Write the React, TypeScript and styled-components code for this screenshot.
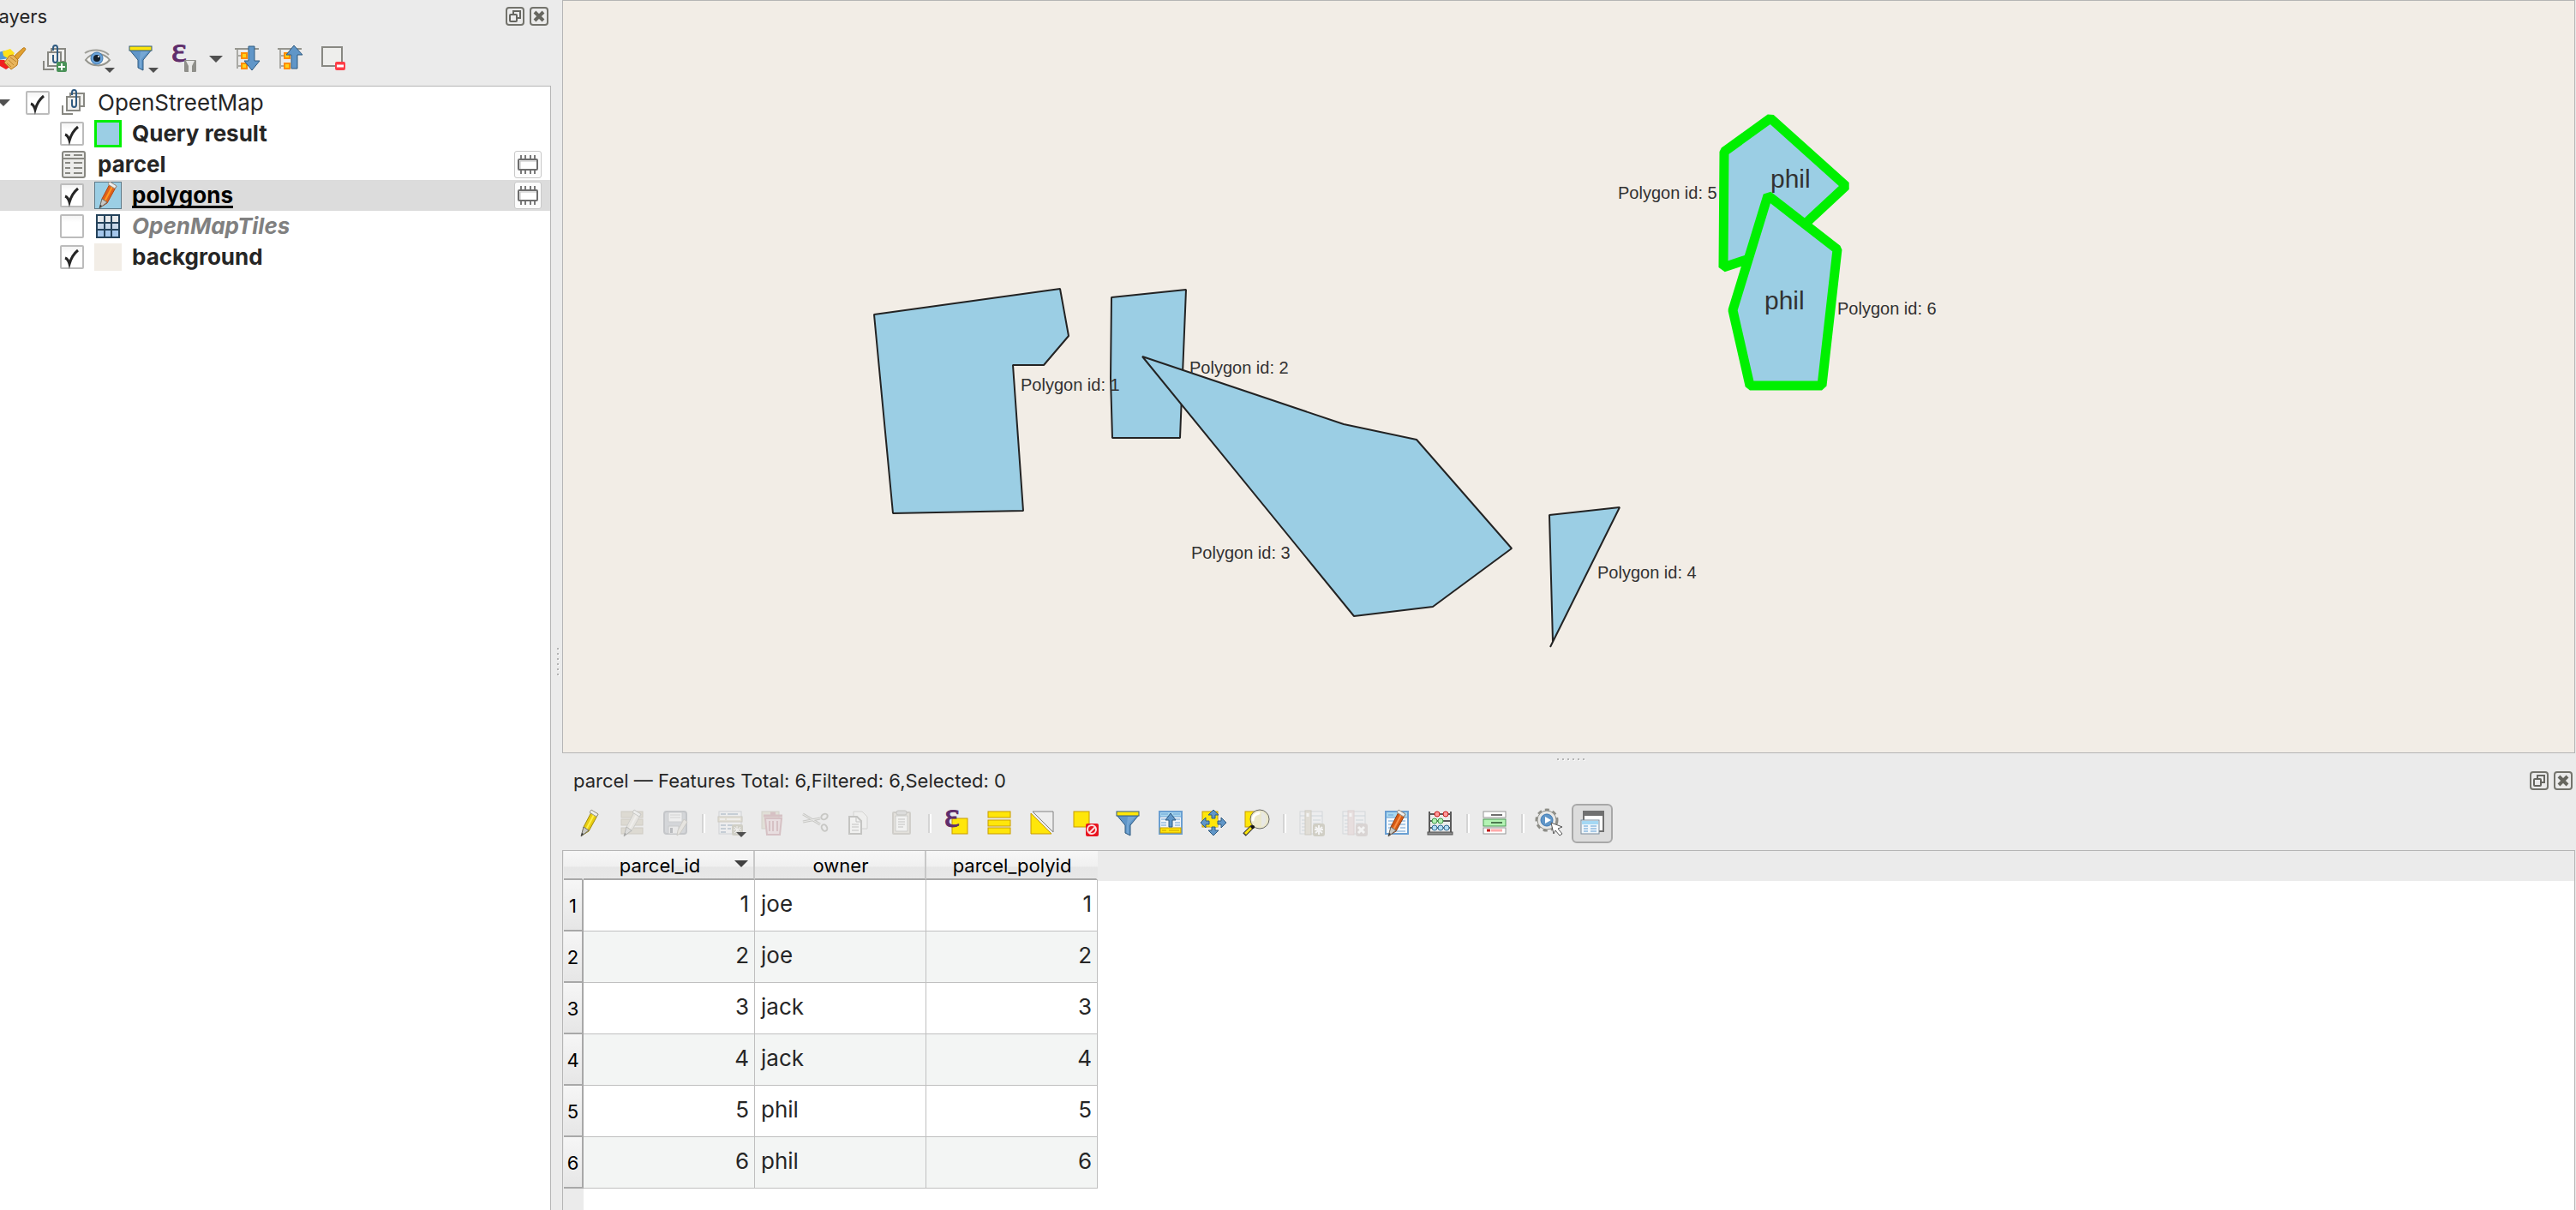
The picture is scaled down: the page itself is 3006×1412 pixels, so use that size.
import React from "react";
import styled, { createGlobalStyle, css } from "styled-components";

const color = {
  chrome: "#ebebeb",
  line: "#b5b5b5",
  grid: "#c0c0c0",
  text: "#262626",
  map: "#f2ede6",
  water: "#9bcee4",
  green: "#00f000",
  yellow: "#ffe60a",
  gold: "#c89b00",
  blue: "#6096c8",
  navy: "#2f5a80",
  grey: "#888882",
  purple: "#5f2d6b",
};

const GlobalStyle = createGlobalStyle`
  *, *::before, *::after { box-sizing: border-box; }
  body {
    margin: 0;
    overflow: hidden;
    background: ${color.chrome};
    color: ${color.text};
    font-family: Inter, "Liberation Sans", sans-serif;
    font-size: 26px;
  }
  button { font: inherit; color: inherit; }
`;

/* ---------- layout ---------- */

const Window = styled.div`
  display: flex;
  height: 100vh;
  overflow: hidden;
`;

const LayersPanel = styled.aside`
  display: flex;
  flex-direction: column;
  flex: none;
  width: 643px;
`;

const Main = styled.main`
  display: flex;
  flex-direction: column;
  flex: 1;
  min-width: 0;
`;

const Splitter = styled.div<{ $vertical?: boolean }>`
  display: flex;
  flex: none;
  gap: 4px;
  align-items: center;
  justify-content: center;
  ${(p) =>
    p.$vertical
      ? css`
          flex-direction: column;
          width: 13px;
          padding-left: 2px;
          padding-top: 132px;
        `
      : css`
          height: 13px;
          padding-left: 4px;
        `}
`;

const Dot = styled.i`
  width: 2px;
  height: 2px;
  background: #b4b4b4;
  box-shadow: 1px 1px 0 #f8f8f8;
`;

const PanelHeader = styled.header<{ $clipped?: boolean }>`
  display: flex;
  align-items: center;
  gap: 6px;
  flex: none;
  height: 38px;
  padding: 0 ${(p) => (p.$clipped ? "3px 0 0" : "4px 0 13px")};
`;

const PanelTitle = styled.h2<{ $clipped?: boolean }>`
  flex: 1;
  margin: 0 0 0 ${(p) => (p.$clipped ? "-14px" : "0")};
  font-size: 22px;
  line-height: 28px;
  font-weight: 400;
  white-space: pre;
`;

const HeaderButton = styled.button`
  display: block;
  width: 22px;
  height: 22px;
  padding: 0;
  border: 0;
  background: none;
  svg { display: block; }
`;

const Toolbar = styled.div<{ $inset?: boolean }>`
  display: flex;
  align-items: center;
  flex: none;
  height: ${(p) => (p.$inset ? "62px" : "60px")};
  margin-bottom: ${(p) => (p.$inset ? "0" : "2px")};
  margin-left: ${(p) => (p.$inset ? "7px" : "-11px")};
`;

const ToolButton = styled.button<{ $pressed?: boolean; $faded?: boolean; $narrow?: boolean }>`
  display: grid;
  place-items: center;
  width: ${(p) => (p.$narrow ? "25px" : p.$pressed ? "48px" : "50px")};
  height: 46px;
  margin: ${(p) => (p.$pressed ? "0 1px" : "0")};
  padding: 0;
  border: 2px solid transparent;
  border-radius: 6px;
  background: none;
  svg { display: block; overflow: visible; }
  ${(p) => p.$pressed && "border-color: #a8a8a8; background: #dcdcdc;"}
  ${(p) => p.$faded && "svg > g { opacity: 0.4; }"}
`;

const Separator = styled.span`
  width: 4px;
  height: 22px;
  margin: 0 4px 0 6px;
  border-left: 2px solid #d4d4d4;
  border-right: 2px solid #fff;
`;

/* ---------- layer tree ---------- */

const Tree = styled.ul`
  flex: 1;
  margin: 0;
  padding: 1px 0 0;
  list-style: none;
  background: #fff;
  border-top: 1px solid ${color.line};
  border-right: 1px solid ${color.line};
`;

const TreeRow = styled.li<{ $level: number; $selected?: boolean }>`
  display: flex;
  align-items: center;
  height: 36px;
  padding-left: ${(p) => p.$level * 70}px;
  padding-right: 10px;
  ${(p) => p.$selected && "background: #dcdcdc;"}
`;

const Expander = styled.button`
  width: 30px;
  height: 36px;
  padding: 0;
  border: 0;
  background: none;
  svg { display: block; }
`;

const CheckWrap = styled.span`
  display: grid;
  margin-right: 12px;
  > * { grid-area: 1 / 1; }
  svg { pointer-events: none; }
`;

const Check = styled.input`
  appearance: none;
  width: 28px;
  height: 28px;
  margin: 0;
  border: 2px solid #bcbcbc;
  border-radius: 2px;
  background: linear-gradient(#f4f4f4, #fff 30%);
`;

const LayerIcon = styled.span`
  display: block;
  width: 32px;
  height: 32px;
  margin-right: 12px;
  svg { display: block; }
`;

const Swatch = styled.span<{ $fill: string; $edge?: string }>`
  display: block;
  width: 32px;
  height: 32px;
  background: ${(p) => p.$fill};
  border: ${(p) => p.$edge || "0"};
`;

const LayerName = styled.label<{ $bold?: boolean; $muted?: boolean; $current?: boolean }>`
  flex: 1;
  font-size: 26px;
  line-height: 32px;
  font-weight: ${(p) => (p.$bold ? 700 : 400)};
  ${(p) => p.$muted && "font-style: italic; color: #808080;"}
  ${(p) =>
    p.$current &&
    `color: #000; text-decoration: underline; text-decoration-thickness: 3px;
     text-underline-offset: 3px; text-decoration-skip-ink: none;`}
`;

const ChipButton = styled.button`
  width: 32px;
  height: 32px;
  padding: 0;
  border: 1px solid #c8c8c8;
  border-radius: 3px;
  background: #fcfcfc;
  svg { display: block; }
`;

/* ---------- map ---------- */

const MapCanvas = styled.section`
  flex: 1;
  min-height: 0;
  margin-right: 1px;
  background: ${color.map};
  border: 1px solid ${color.line};
  svg {
    display: block;
    width: 100%;
    height: 100%;
  }
`;

const MapLabel = styled.text<{ $large?: boolean }>`
  font-family: "Liberation Sans", Arial, sans-serif;
  font-size: ${(p) => (p.$large ? 30 : 20)}px;
  fill: #323232;
`;

const Parcel = styled.polygon<{ $match?: boolean }>`
  fill: ${color.water};
  stroke: ${(p) => (p.$match ? color.green : "#232323")};
  stroke-width: ${(p) => (p.$match ? 11 : 2)};
  stroke-linejoin: bevel;
`;

/* ---------- attribute table ---------- */

const TableArea = styled.div`
  flex: none;
  margin-right: 1px;
  padding-left: 1px;
  padding-bottom: 25px;
  border: 1px solid ${color.line};
  border-bottom: 0;
  background: linear-gradient(${color.chrome} 35px, transparent 35px),
    linear-gradient(to right, ${color.chrome} 24px, #fff 24px);
`;

const Table = styled.table`
  border-collapse: separate;
  border-spacing: 0;
  table-layout: fixed;
  width: 623px;
`;

const Col = styled.col<{ $w: number }>`
  width: ${(p) => p.$w}px;
`;

const HeadCell = styled.th`
  height: 34px;
  padding: 2px 0 0 2px;
  font-size: 22px;
  line-height: 28px;
  font-weight: 400;
  color: #000;
  background: linear-gradient(#f7f7f7, #f0f0f0 55%, #e6e6e6 60%, #e8e8e8);
  border-bottom: 2px solid #a8a8a8;
  border-right: 2px solid #c8c8c8;
  &:first-child, &:last-child { border-right-color: transparent; }
`;

const SortHead = styled.span`
  display: grid;
  grid-template-columns: 1fr 22px;
  align-items: start;
  svg { display: block; margin-top: 8px; }
`;

const RowHead = styled.th`
  height: 60px;
  padding: 2px 0 0;
  font-size: 22px;
  line-height: 28px;
  font-weight: 400;
  color: #000;
  background: linear-gradient(#f6f6f6, #e6e6e6);
  border-right: 2px solid #a8a8a8;
  border-bottom: 2px solid #a8a8a8;
`;

const Cell = styled.td<{ $right?: boolean; $alt?: boolean }>`
  height: 60px;
  padding: 0 6px 3px 7px;
  font-size: 26px;
  line-height: 32px;
  text-align: ${(p) => (p.$right ? "right" : "left")};
  background: ${(p) => (p.$alt ? "#f3f5f4" : "#fff")};
  border-right: 1px solid ${color.grid};
  border-bottom: 1px solid ${color.grid};
`;

/* ---------- icons ---------- */

const Svg = ({ children, size = 32 }: { children: React.ReactNode; size?: number }) => (
  <svg width={size} height={size} viewBox={`0 0 ${size} ${size}`} fill="none" aria-hidden="true">
    <g>{children}</g>
  </svg>
);

const MenuMark = ({ x, y }: { x: number; y: number }) => (
  <path d={`M${x} ${y}h12l-6 6z`} fill="#505050" />
);

const EpsilonText = ({ x, y }: { x: number; y: number }) => (
  <text x={x} y={y} fontFamily='"Liberation Serif", serif' fontSize="42" fill={color.purple} stroke={color.purple} strokeWidth="1">ε</text>
);

const FloatIcon = () => (
  <Svg size={22}>
    <rect x="1" y="1" width="20" height="20" rx="3" stroke="#73736c" strokeWidth="2" />
    <rect x="5" y="9" width="8" height="8" rx="1" stroke="#666660" strokeWidth="2" />
    <path d="M9 8V5h8v8h-3" stroke="#666660" strokeWidth="2" />
  </Svg>
);

const CloseIcon = () => (
  <Svg size={22}>
    <rect x="1" y="1" width="20" height="20" rx="3" stroke="#73736c" strokeWidth="2" />
    <path d="M6 6l10 10M16 6L6 16" stroke="#66665f" strokeWidth="4" />
  </Svg>
);

const BrushIcon = () => (
  <Svg>
    <path d="M0 9l8-2 4 9-12 2z" fill="#4f97d8" />
    <path d="M5 8l9-3 5 5-5 8-8-5z" fill="#ffe21a" />
    <path d="M-2 18l9 0 8 7-6 4-9-5z" fill="#f02020" />
    <path d="M29 4c2-1 4 1 2 3L22 18l-4-4z" fill="#e0a030" stroke="#b97818" />
    <path d="M13 13l4-1 6 6-1 6-7 5-8-8z" fill="#e8b45c" stroke="#b97818" />
    <path d="M10 22l5 4M12 18l6 6M14 15l7 5" stroke="#c08428" strokeWidth="1" />
  </Svg>
);

const GroupShape = () => (
  <>
    <path d="M3 19v10h12" stroke={color.grey} strokeWidth="2" />
    <rect x="12" y="5" width="16" height="15" fill="#f0f0ee" stroke={color.grey} strokeWidth="2" />
    <rect x="8" y="9" width="15" height="16" fill="#f0f0ee" stroke={color.grey} strokeWidth="2" />
    <path d="M14 7V4c0-4 5-4 5 0v14c0 4-5 4-5 0v-6" stroke={color.navy} strokeWidth="2" />
  </>
);

const GroupIcon = () => <Svg><GroupShape /></Svg>;

const AddGroupIcon = () => (
  <Svg>
    <GroupShape />
    <rect x="18" y="20" width="12" height="12" rx="2" fill="#4a9258" />
    <path d="M24 22v8M20 26h8" stroke="#fff" strokeWidth="2" />
  </Svg>
);

const EyeIcon = () => (
  <Svg>
    <path d="M1 10C8 5 22 5 29 12" stroke="#a0a09a" strokeWidth="2" />
    <path d="M2 18C8 9 22 8 30 18C22 27 9 26 2 18z" fill="#f6f6f4" stroke="#96968f" strokeWidth="2" />
    <circle cx="15" cy="16" r="7" fill="#6aa2d8" stroke="#3f78ae" strokeWidth="1" />
    <circle cx="15" cy="16" r="4" fill="#14202c" />
    <circle cx="17" cy="14" r="1" fill="#fff" />
    <MenuMark x={24} y={27} />
  </Svg>
);

const Funnel = () => (
  <>
    <path d="M3 6h26L19 18v12l-6-3v-9z" fill={color.blue} stroke={color.navy} strokeWidth="1" />
    <path d="M16 8l9 0-8 9v11l-2-1V16z" fill="#8ab8e0" opacity="0.5" />
    <rect x="3" y="2" width="26" height="5" fill={color.yellow} stroke={color.navy} strokeWidth="1" />
  </>
);

const FilterMenuIcon = () => <Svg><Funnel /><MenuMark x={25} y={27} /></Svg>;
const FilterIcon = () => <Svg><Funnel /></Svg>;

const ExpressionFilterIcon = () => (
  <Svg>
    <EpsilonText x={2} y={20} />
    <rect x="17" y="18" width="14" height="14" rx="1" fill="#8f8f8a" />
    <path d="M19 19h10l-3 6v7h-4v-7z" fill="#e8e8e6" />
  </Svg>
);

const DropIcon = () => (
  <Svg size={16}><path d="M0 5h16l-8 8z" fill="#505050" /></Svg>
);

const TreeBars = () => (
  <>
    <path d="M1 5h28" stroke="#96968f" strokeWidth="2" />
    <path d="M4 6v22M4 13h5M4 25h5" stroke="#aaaaa5" strokeWidth="2" />
    <rect x="9" y="10" width="6" height="6" fill="#ffd21a" stroke="#ff8c00" strokeWidth="2" />
    <rect x="9" y="22" width="6" height="6" fill="#ffd21a" stroke="#ff8c00" strokeWidth="2" />
  </>
);

const ExpandIcon = () => (
  <Svg>
    <TreeBars />
    <path d="M17 2h7v17h6l-9 11-9-11h5z" fill={color.blue} stroke={color.navy} strokeWidth="1" />
  </Svg>
);

const CollapseIcon = () => (
  <Svg>
    <TreeBars />
    <path d="M17 28h7V12h6L20 1l-9 11h6z" fill={color.blue} stroke={color.navy} strokeWidth="1" />
  </Svg>
);

const RemoveIcon = () => (
  <Svg>
    <rect x="3" y="3" width="23" height="22" fill="#eeeeec" stroke={color.grey} strokeWidth="2" />
    <rect x="18" y="20" width="12" height="10" rx="2" fill="#ff3c46" />
    <path d="M20 25h8" stroke="#fff" strokeWidth="3" />
  </Svg>
);

const Pencil = ({ body, shade, edge }: { body: string; shade: string; edge: string }) => (
  <>
    <path d="M19 1l7 4-11 20-8 5 2-10z" fill={body} stroke={edge} strokeWidth="1" />
    <path d="M22 4L12 23" stroke={shade} strokeWidth="2" />
    <path d="M18 0l8 5-2 3-8-5z" fill="#eeeeec" stroke="#96968f" strokeWidth="1" />
    <path d="M9 20l6 4-9 7z" fill="#c8c8c4" stroke="#6e6e68" strokeWidth="1" />
    <path d="M7 27l2 1-3 3z" fill="#333" />
  </>
);

const YellowPencilIcon = () => (
  <Svg><Pencil body="#e8cc10" shade="#fff04a" edge="#a08a10" /></Svg>
);

const SwatchPencilIcon = () => (
  <Svg>
    <rect x="0" y="0" width="32" height="32" fill={color.water} stroke="#5f7a88" strokeWidth="2" />
    <Pencil body="#e0601c" shade="#ff9a20" edge="#b04810" />
  </Svg>
);

const MultiEditIcon = () => (
  <Svg>
    {[2, 11, 21].map((y) => (
      <rect key={y} x="3" y={y} width="25" height="7" fill="#cac2ae" stroke="#a8a08c" strokeWidth="1" />
    ))}
    <Pencil body="#e0dcd0" shade="#f4f2ec" edge="#a0a098" />
  </Svg>
);

const SaveIcon = () => (
  <Svg>
    <rect x="3" y="2" width="26" height="26" rx="3" fill="#b4b8c0" stroke="#8c9098" strokeWidth="2" />
    <rect x="8" y="3" width="16" height="11" fill="#f4f4f4" stroke="#a0a4a8" />
    <path d="M10 6h12M10 9h12" stroke="#b0b0b0" strokeWidth="1" />
    <rect x="8" y="19" width="12" height="9" fill="#e6e6e6" stroke="#94989c" />
    <rect x="10" y="21" width="3" height="6" fill="#70747c" />
    <path d="M26 11l4 3-8 13-4 3 1-6z" fill="#e0dcd0" stroke="#a09c90" />
  </Svg>
);

const AddFeatureIcon = () => (
  <svg width="32" height="32" viewBox="0 0 32 32" fill="none" aria-hidden="true">
    <g>
      <rect x="3" y="2" width="26" height="26" fill="#f0f2f4" stroke="#a8b0b8" strokeWidth="1" />
      <path d="M5 5h6M13 5h12M5 18h6M5 22h6M5 26h6M13 18h6M13 22h4" stroke="#8ea2b6" strokeWidth="2" />
      <rect x="2" y="8" width="28" height="6" fill="#d6cfb8" stroke="#a09880" />
      <path d="M4 11h6M12 11h16" stroke="#f4f2ea" strokeWidth="2" />
      <rect x="18" y="17" width="13" height="13" rx="2" fill="#aaa690" />
      <path d="M24 19v9M20 23h9M21 20l7 7M28 20l-7 7" stroke="#fff" strokeWidth="1" />
    </g>
    <MenuMark x={23} y={26} />
  </svg>
);

const TrashIcon = () => (
  <Svg>
    <rect x="3" y="2" width="20" height="20" fill="#d4ceba" stroke="#b0aa98" />
    <path d="M5 7h22M13 4h6" stroke="#b8848c" strokeWidth="3" />
    <path d="M7 10h19l-2 19H9z" fill="#e6ccd0" stroke="#b8848c" strokeWidth="2" />
    <path d="M12 13v12M16 13v12M21 13v12" stroke="#b8848c" strokeWidth="2" />
  </Svg>
);

const CutIcon = () => (
  <Svg>
    <path d="M1 5l20 12M1 14l20-4" stroke="#96968f" strokeWidth="3" />
    <path d="M1 5l20 12M1 14l20-4" stroke="#e6e6e2" strokeWidth="1" />
    <ellipse cx="26" cy="8" rx="4" ry="3" transform="rotate(-35 26 8)" stroke="#96968f" strokeWidth="2" />
    <ellipse cx="26" cy="21" rx="3" ry="4" transform="rotate(-30 26 21)" stroke="#96968f" strokeWidth="2" />
  </Svg>
);

const CopyIcon = () => (
  <Svg>
    <path d="M10 2h10l6 6v14H10z" fill="#f4f4f2" stroke="#b0b0aa" />
    <path d="M5 8h9l5 5v15H5z" fill="#fafaf8" stroke="#8c8c86" strokeWidth="2" />
    <path d="M13 8v6h6M8 17h8M8 20h8M8 24h8" stroke="#8c8c86" strokeWidth="1" />
  </Svg>
);

const PasteIcon = () => (
  <Svg>
    <rect x="6" y="3" width="20" height="25" rx="1" fill="#d8d4c8" stroke="#a8a49a" strokeWidth="2" />
    <path d="M9 7h14v18H9z" fill="#fafaf8" stroke="#a0a09a" />
    <rect x="10" y="1" width="12" height="5" rx="2" fill="#c8c8c4" stroke="#8c8c86" />
    <path d="M12 11h8M12 14h8M12 17h8M12 20h6" stroke="#8c8c86" strokeWidth="1" />
  </Svg>
);

const YellowBox = ({ x, y, w, h }: { x: number; y: number; w: number; h: number }) => (
  <rect x={x} y={y} width={w} height={h} fill={color.yellow} stroke={color.gold} strokeWidth="1" />
);

const SelectExpressionIcon = () => (
  <Svg>
    <YellowBox x={11} y={10} w={18} h={18} />
    <EpsilonText x={2} y={20} />
  </Svg>
);

const SelectAllIcon = () => (
  <Svg>
    <YellowBox x={3} y={2} w={26} h={7} />
    <YellowBox x={3} y={12} w={26} h={7} />
    <YellowBox x={3} y={21} w={26} h={7} />
  </Svg>
);

const InvertIcon = () => (
  <Svg>
    <path d="M3 4v24h24z" fill={color.yellow} stroke={color.gold} strokeWidth="1" />
    <path d="M5 2h24v24z" fill="#eeeeee" stroke="#808080" strokeWidth="1" />
  </Svg>
);

const DeselectIcon = () => (
  <Svg>
    <YellowBox x={3} y={2} w={18} h={18} />
    <rect x="17" y="16" width="15" height="15" rx="2" fill="#e81420" />
    <circle cx="24" cy="23" r="5" stroke="#fbe0e0" strokeWidth="2" />
    <path d="M21 27l7-7" stroke="#fbe0e0" strokeWidth="2" />
  </Svg>
);

const MoveTopIcon = () => (
  <Svg>
    <rect x="3" y="2" width="26" height="26" fill="#f0f4f8" stroke="#6a9fd2" strokeWidth="2" />
    <rect x="4" y="3" width="24" height="5" fill="#a8d8f0" />
    <path d="M5 5h8M19 5h8M4 8h24M5 11h6M21 11h6M5 15h6M21 15h6M5 18h6M21 18h6" stroke="#6a9fd2" strokeWidth="1" />
    <YellowBox x={4} y={21} w={24} h={6} />
    <path d="M6 24h5M14 24h12" stroke={color.gold} strokeWidth="1" />
    <path d="M14 20v-8h-4l6-8 6 8h-4v8z" fill={color.blue} stroke={color.navy} strokeWidth="1" />
  </Svg>
);

const PanIcon = () => (
  <Svg>
    <YellowBox x={3} y={2} w={18} h={18} />
    <rect x="12" y="11" width="9" height="9" fill={color.yellow} />
    <g fill={color.blue} stroke={color.navy} strokeWidth="1">
      <path d="M16 0l6 6h-4v4h-4V6h-4z" />
      <path d="M16 30l6-6h-4v-4h-4v4h-4z" />
      <path d="M1 15l6-6v4h4v4H7v4z" />
      <path d="M31 15l-6-6v4h-4v4h4v4z" />
    </g>
  </Svg>
);

const ZoomIcon = () => (
  <Svg>
    <YellowBox x={3} y={2} w={18} h={18} />
    <path d="M12 19L2 29" stroke="#333" strokeWidth="5" />
    <path d="M10 21l-7 7" stroke={color.yellow} strokeWidth="3" />
    <circle cx="20" cy="11" r="11" fill="#ebe8cc" stroke="#6a6a66" strokeWidth="1" />
    <path d="M22 2a10 10 0 010 18z" fill="#e8e8e4" />
    <path d="M12 12c0-5 3-7 7-8" stroke="#fff" strokeWidth="3" strokeLinecap="round" />
    <circle cx="12" cy="20" r="2" fill="#111" />
  </Svg>
);

const FieldBase = ({ tint, edge }: { tint: string; edge: string }) => (
  <>
    <rect x="3" y="2" width="26" height="26" fill="#f0f2f4" stroke="#b4bcc4" />
    <path d="M3 7h26M5 12h4M18 12h9M5 16h4M18 16h9M5 20h4M5 24h4" stroke="#a4b4c4" strokeWidth="1" />
    <rect x="9" y="1" width="7" height="28" fill={tint} stroke={edge} />
    <path d="M12 4v4" stroke="#fff" strokeWidth="3" />
  </>
);

const NewFieldIcon = () => (
  <Svg>
    <FieldBase tint="#d0cab8" edge="#a49c88" />
    <rect x="18" y="16" width="14" height="15" rx="3" fill="#a8a48c" />
    <path d="M25 18v11M20 23h10M21 20l8 7M29 20l-8 7" stroke="#fff" strokeWidth="2" />
  </Svg>
);

const DeleteFieldIcon = () => (
  <Svg>
    <FieldBase tint="#e2cccc" edge="#c8acac" />
    <rect x="18" y="16" width="14" height="15" rx="3" fill="#c0b4b0" />
    <path d="M21 20l7 7M28 20l-7 7" stroke="#fff" strokeWidth="3" />
  </Svg>
);

const OrganizeIcon = () => (
  <Svg>
    <rect x="3" y="2" width="26" height="26" fill="#f4f8fb" stroke="#6a9fd2" strokeWidth="2" />
    <rect x="4" y="3" width="24" height="6" fill="#a8d8f0" />
    <path d="M6 6h6M4 9h24M6 13h6M15 13h11M6 17h6M6 21h3M20 21h6M15 25h11M15 17h11" stroke="#6a9fd2" strokeWidth="1" />
    <Pencil body="#d85a14" shade="#f89048" edge="#8c3c10" />
  </Svg>
);

const AbacusIcon = () => (
  <Svg>
    <path d="M4 2v24M29 2v24M4 5h25M4 13h25M4 21h25" stroke="#5a5a5a" strokeWidth="2" />
    <rect x="2" y="26" width="29" height="3" fill="#909090" stroke="#505050" />
    {[
      [13, 5, "#ff9c9c", "#c81414"], [23, 5, "#ff9c9c", "#c81414"],
      [10, 13, "#b4f0b4", "#3c9a46"], [17, 13, "#b4f0b4", "#3c9a46"],
      [10, 21, "#b4dcf4", "#2f6a94"], [17, 21, "#b4dcf4", "#2f6a94"], [24, 21, "#b4dcf4", "#2f6a94"],
    ].map(([cx, cy, f, s]) => (
      <circle key={`${cx}-${cy}`} cx={cx} cy={cy} r="3" fill={f as string} stroke={s as string} strokeWidth="1" />
    ))}
  </Svg>
);

const FormattingIcon = () => (
  <Svg>
    <rect x="3" y="2" width="26" height="7" fill="#fff" stroke="#969696" strokeWidth="1" />
    <path d="M12 6h13" stroke="#6e6e6e" strokeWidth="2" />
    <rect x="3" y="11" width="26" height="8" fill="#b4f4b4" stroke="#4a9a54" strokeWidth="1" />
    <path d="M12 15h13" stroke="#4c7a50" strokeWidth="2" />
    <rect x="3" y="21" width="26" height="7" fill="#fff" stroke="#969696" strokeWidth="1" />
    <path d="M12 24h13" stroke="#ffaaaa" strokeWidth="3" />
    <path d="M7 24h4" stroke="#c01414" strokeWidth="3" />
  </Svg>
);

const ActionsIcon = () => (
  <Svg>
    <circle cx="13" cy="12" r="12" stroke="#8c8c86" strokeWidth="3" strokeDasharray="5 4" />
    <circle cx="13" cy="12" r="11" fill="#e8e8e6" stroke="#8c8c86" strokeWidth="1" />
    <circle cx="13" cy="12" r="7" fill={color.blue} stroke="#3c78b4" strokeWidth="1" />
    <path d="M11 8l7 4-7 4z" fill="#fff" />
    <path d="M18 15l13 5-5 2 5 6-3 2-5-6-2 4z" fill="#fff" stroke="#555" strokeWidth="1" />
  </Svg>
);

const DockIcon = () => (
  <Svg>
    <rect x="6" y="2" width="23" height="23" fill="#fff" stroke="#707070" strokeWidth="2" />
    <rect x="5" y="1" width="25" height="6" fill="#707070" />
    <rect x="3" y="12" width="21" height="16" fill="#f0f6fa" stroke="#7a8c9c" strokeWidth="1" />
    <rect x="4" y="13" width="19" height="4" fill="#a4d8f4" />
    <path d="M6 19h5M14 19h7M6 22h5M14 22h7M6 25h5M14 25h7" stroke="#5c9cd4" strokeWidth="1" />
  </Svg>
);

const TableLayerIcon = () => (
  <Svg>
    <rect x="3" y="1" width="26" height="30" rx="2" fill="#ececea" stroke={color.grey} strokeWidth="2" />
    <path d="M4 9h24M6 5h6M16 5h10M6 14h6M16 14h10M6 20h6M16 20h10M6 26h6M16 26h10" stroke={color.grey} strokeWidth="2" />
  </Svg>
);

const TilesIcon = () => (
  <Svg>
    <rect x="3" y="3" width="26" height="9" fill="#e8eaec" />
    <rect x="3" y="12" width="26" height="8" fill="#c8d8ea" />
    <rect x="3" y="20" width="26" height="9" fill="#a4c6ea" />
    <path d="M3 3h26v26H3zM12 3v26M20 3v26M3 12h26M3 20h26" stroke="#24425a" strokeWidth="2" />
  </Svg>
);

const MemoryIcon = () => (
  <svg width="30" height="30" viewBox="0 0 30 30" fill="none" aria-hidden="true">
    <path d="M7 4v5M12 4v5M18 4v5M23 4v5M7 22v4M12 22v4M18 22v4M23 22v4" stroke="#7a7a7a" strokeWidth="2" />
    <rect x="4" y="9" width="22" height="12" rx="1" fill="#fff" stroke="#6e6e6e" strokeWidth="2" />
    <path d="M6 20V11h19" stroke="#c0c0c0" strokeWidth="1" />
  </svg>
);

/* ---------- data ---------- */

type Layer = {
  name: string;
  level: number;
  icon: React.ReactNode;
  checked?: boolean;
  bold?: boolean;
  muted?: boolean;
  current?: boolean;
  memory?: boolean;
};

const layers: Layer[] = [
  { name: "OpenStreetMap", level: 0, icon: <GroupIcon />, checked: true },
  { name: "Query result", level: 1, icon: <Swatch $fill={color.water} $edge={`3px solid ${color.green}`} />, checked: true, bold: true },
  { name: "parcel", level: 1, icon: <TableLayerIcon />, bold: true, memory: true },
  { name: "polygons", level: 1, icon: <SwatchPencilIcon />, checked: true, bold: true, current: true, memory: true },
  { name: "OpenMapTiles", level: 1, icon: <TilesIcon />, checked: false, bold: true, muted: true },
  { name: "background", level: 1, icon: <Swatch $fill={color.map} />, checked: true, bold: true },
];

type Tool = { label: string; icon?: React.ReactNode; faded?: boolean; pressed?: boolean; narrow?: boolean };

const layerTools: Tool[] = [
  { label: "Style", icon: <BrushIcon /> },
  { label: "Add group", icon: <AddGroupIcon /> },
  { label: "Map themes", icon: <EyeIcon /> },
  { label: "Filter legend", icon: <FilterMenuIcon /> },
  { label: "Filter by expression", icon: <ExpressionFilterIcon /> },
  { label: "Expression menu", icon: <DropIcon />, narrow: true },
  { label: "Expand all", icon: <ExpandIcon /> },
  { label: "Collapse all", icon: <CollapseIcon /> },
  { label: "Remove layer", icon: <RemoveIcon /> },
];

const tableTools: Tool[][] = [
  [
    { label: "Toggle editing", icon: <YellowPencilIcon /> },
    { label: "Multi edit", icon: <MultiEditIcon />, faded: true },
    { label: "Save edits", icon: <SaveIcon />, faded: true },
  ],
  [
    { label: "Add feature", icon: <AddFeatureIcon />, faded: true },
    { label: "Delete selected", icon: <TrashIcon />, faded: true },
    { label: "Cut", icon: <CutIcon />, faded: true },
    { label: "Copy", icon: <CopyIcon />, faded: true },
    { label: "Paste", icon: <PasteIcon />, faded: true },
  ],
  [
    { label: "Select by expression", icon: <SelectExpressionIcon /> },
    { label: "Select all", icon: <SelectAllIcon /> },
    { label: "Invert selection", icon: <InvertIcon /> },
    { label: "Deselect all", icon: <DeselectIcon /> },
    { label: "Filter", icon: <FilterIcon /> },
    { label: "Move selection to top", icon: <MoveTopIcon /> },
    { label: "Pan to selection", icon: <PanIcon /> },
    { label: "Zoom to selection", icon: <ZoomIcon /> },
  ],
  [
    { label: "New field", icon: <NewFieldIcon />, faded: true },
    { label: "Delete field", icon: <DeleteFieldIcon />, faded: true },
    { label: "Organize columns", icon: <OrganizeIcon /> },
    { label: "Field calculator", icon: <AbacusIcon /> },
  ],
  [{ label: "Conditional formatting", icon: <FormattingIcon /> }],
  [
    { label: "Actions", icon: <ActionsIcon /> },
    { label: "Dock attribute table", icon: <DockIcon />, pressed: true },
  ],
];

const rows = [
  { id: 1, owner: "joe", poly: 1 },
  { id: 2, owner: "joe", poly: 2 },
  { id: 3, owner: "jack", poly: 3 },
  { id: 4, owner: "jack", poly: 4 },
  { id: 5, owner: "phil", poly: 5 },
  { id: 6, owner: "phil", poly: 6 },
];

/* Canvas coordinates, origin at the top left corner of the map. */
const shapes: { points: string; match?: boolean }[] = [
  { points: "363,366 580,336 590,391 561,425 525,425 537,595 385,598" },
  { points: "640,346 727,337 720,510 641,510 639,440" },
  { points: "676,415 911,494 996,512 1107,639 1015,707 923,718" },
  { points: "1151,600 1233,591 1152,754 1155,748" },
  { points: "1355,176 1409,137 1497,216 1441,268 1402,295 1354,311", match: true },
  { points: "1406,227 1487,290 1469,449 1385,449 1365,361", match: true },
];

const mapLabels = [
  { text: "Polygon id: 1", x: 534, y: 455 },
  { text: "Polygon id: 2", x: 731, y: 435 },
  { text: "Polygon id: 3", x: 733, y: 651 },
  { text: "Polygon id: 4", x: 1207, y: 674 },
  { text: "Polygon id: 5", x: 1231, y: 231 },
  { text: "Polygon id: 6", x: 1487, y: 366 },
  { text: "phil", x: 1409, y: 218, large: true },
  { text: "phil", x: 1402, y: 360, large: true },
];

/* ---------- components ---------- */

const Tools = ({ items }: { items: Tool[] }) => (
  <>
    {items.map((t) => (
      <ToolButton
        key={t.label}
        type="button"
        aria-label={t.label}
        $faded={t.faded}
        $pressed={t.pressed}
        $narrow={t.narrow}
      >
        {t.icon}
      </ToolButton>
    ))}
  </>
);

const PanelButtons = () => (
  <>
    <HeaderButton type="button" aria-label="Float panel"><FloatIcon /></HeaderButton>
    <HeaderButton type="button" aria-label="Close panel"><CloseIcon /></HeaderButton>
  </>
);

const Dots = () => (
  <>{[0, 1, 2, 3, 4, 5].map((n) => <Dot key={n} />)}</>
);

const LayerItem = ({ layer }: { layer: Layer }) => {
  const [on, setOn] = React.useState(Boolean(layer.checked));
  const id = `layer-${layer.name.replace(/\s/g, "-")}`;
  const hasCheck = layer.checked !== undefined;
  return (
    <TreeRow $level={layer.level} $selected={layer.current}>
      {layer.level === 0 && (
        <Expander type="button" aria-label="Collapse group">
          <svg width="30" height="36" viewBox="0 0 30 36" aria-hidden="true">
            <path d="M-4 14h16l-8 8z" fill="#505050" />
          </svg>
        </Expander>
      )}
      {hasCheck && (
        <CheckWrap>
          <Check id={id} type="checkbox" checked={on} onChange={() => setOn(!on)} />
          {on && (
            <svg width="28" height="28" viewBox="0 0 28 28" fill="none" aria-hidden="true">
              <path d="M6 15c3 1 4 3 5 7C13 15 16 10 21 6" stroke="#262626" strokeWidth="3" />
            </svg>
          )}
        </CheckWrap>
      )}
      <LayerIcon>{layer.icon}</LayerIcon>
      <LayerName
        as={hasCheck ? "label" : "span"}
        htmlFor={hasCheck ? id : undefined}
        $bold={layer.bold}
        $muted={layer.muted}
        $current={layer.current}
      >
        {layer.name}
      </LayerName>
      {layer.memory && (
        <ChipButton type="button" aria-label="Temporary scratch layer"><MemoryIcon /></ChipButton>
      )}
    </TreeRow>
  );
};

export default function App() {
  return (
    <>
      <GlobalStyle />
      <Window>
        <LayersPanel>
          <PanelHeader $clipped>
            <PanelTitle $clipped>Layers</PanelTitle>
            <PanelButtons />
          </PanelHeader>
          <Toolbar>
            <Tools items={layerTools} />
          </Toolbar>
          <Tree>
            {layers.map((l) => <LayerItem key={l.name} layer={l} />)}
          </Tree>
        </LayersPanel>
        <Splitter $vertical><Dots /></Splitter>
        <Main>
          <MapCanvas>
            <svg role="img" aria-label="Map">
              {shapes.map((s) => <Parcel key={s.points} points={s.points} $match={s.match} />)}
              {mapLabels.map((l) => (
                <MapLabel key={`${l.x}-${l.y}`} x={l.x} y={l.y} $large={l.large}>{l.text}</MapLabel>
              ))}
            </svg>
          </MapCanvas>
          <Splitter><Dots /></Splitter>
          <PanelHeader>
            <PanelTitle>parcel — Features Total: 6,Filtered: 6,Selected: 0</PanelTitle>
            <PanelButtons />
          </PanelHeader>
          <Toolbar $inset>
            {tableTools.map((group, i) => (
              <React.Fragment key={group[0].label}>
                {i > 0 && <Separator />}
                <Tools items={group} />
              </React.Fragment>
            ))}
          </Toolbar>
          <TableArea>
            <Table>
              <colgroup>
                <Col $w={23} />
                <Col $w={200} />
                <Col $w={200} />
                <Col $w={200} />
              </colgroup>
              <thead>
                <tr>
                  <HeadCell aria-label="Row" />
                  <HeadCell scope="col">
                    <SortHead>
                      <span>parcel_id</span>
                      <svg width="16" height="8" viewBox="0 0 16 8" aria-hidden="true">
                        <path d="M0 0h16L8 8z" fill="#404040" />
                      </svg>
                    </SortHead>
                  </HeadCell>
                  <HeadCell scope="col">owner</HeadCell>
                  <HeadCell scope="col">parcel_polyid</HeadCell>
                </tr>
              </thead>
              <tbody>
                {rows.map((r, i) => (
                  <tr key={r.id}>
                    <RowHead scope="row">{i + 1}</RowHead>
                    <Cell $right $alt={i % 2 === 1}>{r.id}</Cell>
                    <Cell $alt={i % 2 === 1}>{r.owner}</Cell>
                    <Cell $right $alt={i % 2 === 1}>{r.poly}</Cell>
                  </tr>
                ))}
              </tbody>
            </Table>
          </TableArea>
        </Main>
      </Window>
    </>
  );
}
